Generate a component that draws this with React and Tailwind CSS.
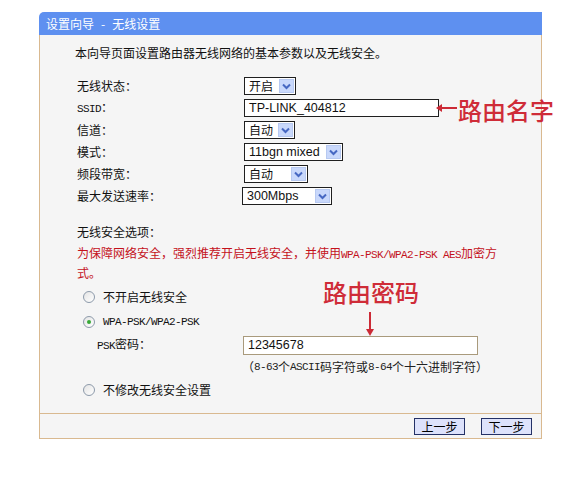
import React from "react";

const cjk = { fontFamily: '"Noto Sans CJK SC", "Liberation Sans", sans-serif' };
const arial = { fontFamily: '"Liberation Sans", "Noto Sans CJK SC", sans-serif' };
const mono = { fontFamily: '"Liberation Mono", monospace' };

function M({ children }) {
  return (
    <span className="text-[11px] tracking-[-0.6px]" style={mono}>
      {children}
    </span>
  );
}

function Select({ value, width, latin }) {
  return (
    <div
      className="flex h-[18px] items-center justify-between border border-[#1f1f1f] bg-white"
      style={{ width }}
    >
      <span
        className={latin ? "pl-[4px] text-[12.5px] leading-none" : "pl-[4px] text-[12px] leading-none"}
        style={latin ? arial : cjk}
      >
        {value}
      </span>
      <span className="mr-[1px] flex h-[14px] w-[15px] items-center justify-center border border-[#b7c9f1] bg-[#c9d8fb]">
        <svg width="9" height="7" viewBox="0 0 9 7">
          <path d="M1 1.5 L4.5 5 L8 1.5" fill="none" stroke="#4768c2" strokeWidth="2" />
        </svg>
      </span>
    </div>
  );
}

function Row({ label, children }) {
  return (
    <div className="flex h-[22px] items-center">
      <div className="w-[167px] text-[12px]">{label}</div>
      {children}
    </div>
  );
}

function Radio({ checked }) {
  return (
    <span className="flex h-[12px] w-[12px] items-center justify-center rounded-full border border-[#8d9aaa] bg-gradient-to-br from-[#e4e4e4] to-white">
      {checked && <span className="h-[4px] w-[4px] rounded-full bg-[#36a836]" />}
    </span>
  );
}

function Button({ children }) {
  return (
    <button
      type="button"
      className="flex h-[17px] w-[51px] items-center justify-center border border-[#243166] bg-[#dde2fb] text-[12px] leading-none text-black"
    >
      {children}
    </button>
  );
}

export default function App() {
  return (
    <div className="h-[485px] w-[583px] bg-white pl-[39px] pt-[12px] text-[#111]" style={cjk}>
      <div className="relative w-[503px]">
        <div className="flex h-[23px] items-center rounded-tl-[5px] bg-[#5e90f0] pl-[7px] text-[12px] text-white">
          设置向导<span className="mx-[7px]">-</span>无线设置
        </div>

        <div className="border-x border-[#d9b990] bg-[#f5f5f5] pb-[13px] pl-[35px] pt-[10px]">
          <p className="text-[12px] leading-[16px]">本向导页面设置路由器无线网络的基本参数以及无线安全。</p>

          <div className="ml-[2px] mt-[14px]">
            <Row label="无线状态：">
              <Select value="开启" width={52} />
            </Row>
            <Row label={<><M>SSID</M>：</>}>
              <div className="flex h-[18px] w-[195px] items-center border border-[#1f1f1f] bg-white pl-[4px] text-[12.5px]" style={arial}>
                TP-LINK_404812
              </div>
            </Row>
            <Row label="信道：">
              <Select value="自动" width={51} />
            </Row>
            <Row label="模式：">
              <Select value="11bgn mixed" width={99} latin />
            </Row>
            <Row label="频段带宽：">
              <Select value="自动" width={64} />
            </Row>
            <Row label="最大发送速率：">
              <div className="-ml-[2px]">
                <Select value="300Mbps" width={90} latin />
              </div>
            </Row>
          </div>

          <p className="ml-[2px] mt-[17px] text-[12px] leading-[16px]">无线安全选项：</p>
          <p className="ml-[2px] mt-[4px] whitespace-nowrap text-[12px] leading-[18px] text-[#c4121c]">
            为保障网络安全，强烈推荐开启无线安全，并使用<M>WPA-PSK/WPA2-PSK AES</M>加密方
            <br />
            式。
          </p>

          <div className="ml-[8px] mt-[5px] flex h-[20px] items-center gap-[8px] text-[12px]">
            <Radio />
            <span>不开启无线安全</span>
          </div>
          <div className="ml-[8px] mt-[5px] flex h-[20px] items-center gap-[8px] text-[12px]">
            <Radio checked />
            <M>WPA-PSK/WPA2-PSK</M>
          </div>
          <div className="ml-[22px] mt-[3px] flex h-[20px] items-center text-[12px]">
            <span className="w-[146px]">
              <M>PSK</M>密码：
            </span>
            <div className="flex h-[19px] w-[235px] items-center border border-[#a99a7c] bg-white pl-[4px] text-[12.5px]" style={arial}>
              12345678
            </div>
          </div>
          <div className="ml-[167px] mt-[4px] flex h-[16px] items-center whitespace-nowrap text-[12px] text-[#222]">
            （<M>8-63</M>个<M>ASCII</M>码字符或<M>8-64</M>个十六进制字符）
          </div>
          <div className="ml-[8px] mt-[5px] flex h-[20px] items-center gap-[8px] text-[12px]">
            <Radio />
            <span>不修改无线安全设置</span>
          </div>
        </div>

        <div className="flex h-[26px] items-start justify-end gap-[16px] border border-[#d9b990] bg-[#f5f5f5] pr-[9px] pt-[4px]">
          <Button>上一步</Button>
          <Button>下一步</Button>
        </div>

        <svg className="absolute left-[397px] top-[91px]" width="22" height="10" viewBox="0 0 22 10">
          <path d="M4 5 L21 5" stroke="#cc2a36" strokeWidth="2" />
          <path d="M0 5 L6 1 L6 9 Z" fill="#cc2a36" />
        </svg>
        <div className="absolute left-[419px] top-[86px] whitespace-nowrap text-[24px] font-medium leading-[24px] text-[#cf2c38]">
          路由名字
        </div>

        <div className="absolute left-[284px] top-[268px] whitespace-nowrap text-[24px] font-medium leading-[24px] text-[#cf2c38]">
          路由密码
        </div>
        <svg className="absolute left-[326px] top-[300px]" width="10" height="24" viewBox="0 0 10 24">
          <path d="M5 0 L5 18" stroke="#cc2a36" strokeWidth="2" />
          <path d="M5 24 L1 17 L9 17 Z" fill="#cc2a36" />
        </svg>
      </div>
    </div>
  );
}
